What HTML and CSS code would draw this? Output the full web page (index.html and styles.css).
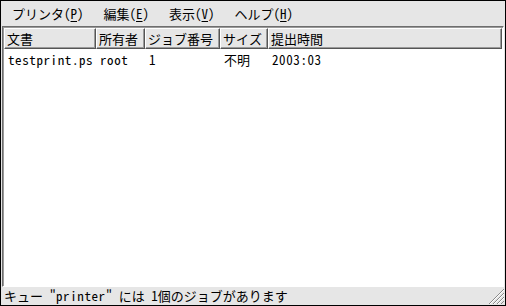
FILE: index.html
```html
<!DOCTYPE html>
<html lang="ja">
<head>
  <meta charset="UTF-8">
  <title>プリンタ</title>
  <link rel="stylesheet" href="styles.css">
</head>
<body>
  <div class="window">

    <!-- Menu bar -->
    <div class="menubar">
      <span class="menu-item">プリンタ(<u>P</u>)</span>
      <span class="menu-item">編集(<u>E</u>)</span>
      <span class="menu-item">表示(<u>V</u>)</span>
      <span class="menu-item">ヘルプ(<u>H</u>)</span>
    </div>

    <!-- Job list -->
    <div class="job-frame">
      <div class="job-header">
        <div class="col col-doc">文書</div>
        <div class="col col-owner">所有者</div>
        <div class="col col-job">ジョブ番号</div>
        <div class="col col-size">サイズ</div>
        <div class="col col-time">提出時間</div>
      </div>
      <div class="job-row">
        <div class="cell col-doc latin">testprint.ps</div>
        <div class="cell col-owner latin">root</div>
        <div class="cell col-job latin">1</div>
        <div class="cell col-size">不明</div>
        <div class="cell col-time latin">2003:03</div>
      </div>
    </div>

    <!-- Status bar -->
    <div class="statusbar">
      <span class="status-text">キュー "<span class="latin">printer</span>" には 1個のジョブがあります</span>
      <svg class="grip" width="16" height="16" viewBox="0 0 16 16">
        <g stroke="#8a8a8a" stroke-width="1">
          <line x1="1" y1="16" x2="16" y2="1"/>
          <line x1="5" y1="16" x2="16" y2="5"/>
          <line x1="9" y1="16" x2="16" y2="9"/>
          <line x1="13" y1="16" x2="16" y2="13"/>
        </g>
        <g stroke="#ffffff" stroke-width="1">
          <line x1="2" y1="16" x2="16" y2="2"/>
          <line x1="6" y1="16" x2="16" y2="6"/>
          <line x1="10" y1="16" x2="16" y2="10"/>
        </g>
      </svg>
    </div>

  </div>
</body>
</html>
```

FILE: styles.css
```css
body {
  margin: 0;
  padding: 0;
  background-color: #e6e6e6;
  font-family: "Noto Sans Mono CJK JP", "Noto Sans CJK JP", monospace;
  font-size: 13px;
  color: #000;
}

.window {
  width: 506px;
  height: 306px;
  box-sizing: border-box;
  border: 1px solid #000;
  background-color: #e6e6e6;
  display: flex;
  flex-direction: column;
}

.menubar {
  height: 25px;
  display: flex;
  align-items: center;
  padding-left: 1px;
  padding-top: 1px;
  box-sizing: border-box;
}

.menu-item {
  padding: 0 10px;
  line-height: 18px;
}

.menu-item u {
  text-underline-offset: 2px;
}

.job-frame {
  flex: 1;
  margin: 0 1px;
  border: 1px solid #6e6e6e;
  border-right-color: #fff;
  border-bottom-color: #fff;
  background-color: #fff;
  box-shadow: inset 1px 1px 0 #9a9a9a;
  padding: 1px;
}

.job-header {
  display: flex;
  height: 21px;
  background-color: #e6e6e6;
}

.col {
  box-sizing: border-box;
  border-top: 1px solid #fff;
  border-left: 1px solid #fff;
  border-right: 1px solid #555;
  border-bottom: 1px solid #555;
  box-shadow: inset -1px -1px 0 #9a9a9a;
  padding-left: 2px;
  line-height: 19px;
  white-space: nowrap;
}

.job-row {
  display: flex;
  height: 20px;
  align-items: center;
}

.cell {
  box-sizing: border-box;
  padding-left: 4px;
  white-space: nowrap;
}

.latin {
  letter-spacing: 0.6px;
}

.col-doc { width: 92px; }
.col-owner { width: 49px; }
.col-job { width: 75px; }
.col-size { width: 48px; }
.col-time { flex: 1; }

.statusbar {
  height: 18px;
  display: flex;
  align-items: center;
  justify-content: space-between;
  padding-left: 3px;
}

.status-text {
  line-height: 16px;
}

.grip {
  align-self: flex-end;
  margin-right: 1px;
  margin-bottom: 1px;
}
```
